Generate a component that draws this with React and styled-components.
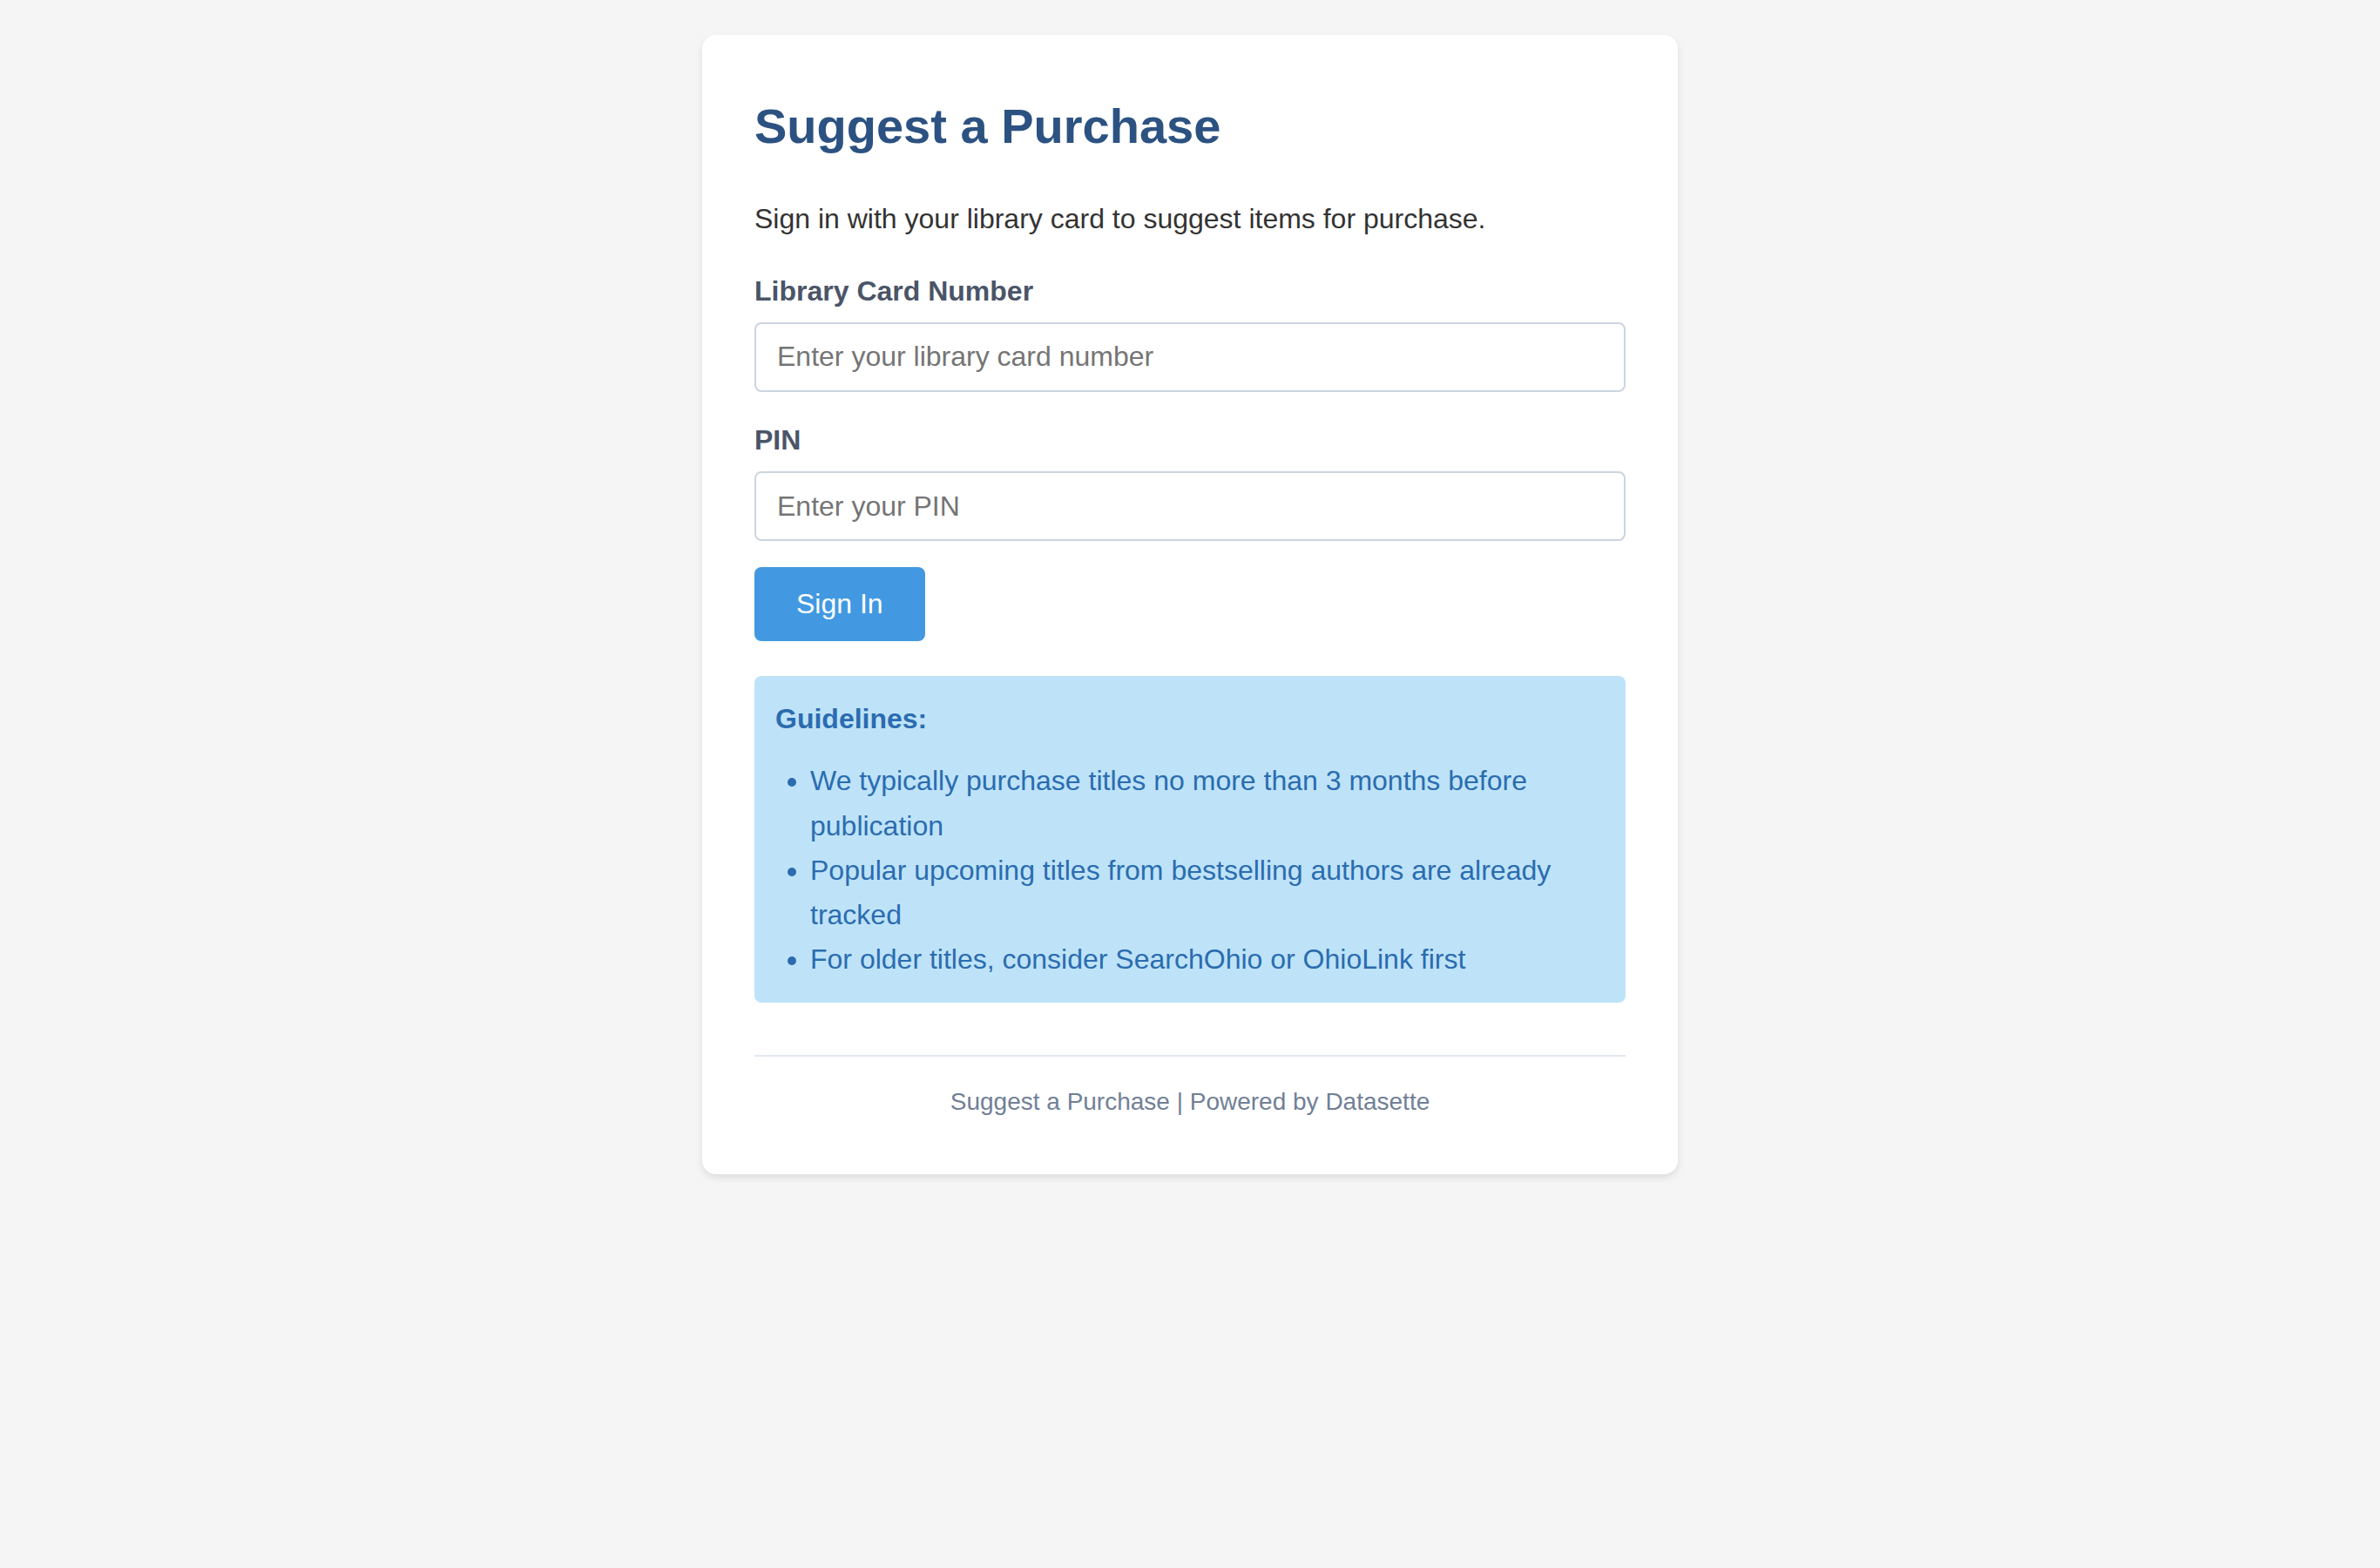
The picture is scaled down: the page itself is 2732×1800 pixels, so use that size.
import styled, { createGlobalStyle } from 'styled-components';

const GlobalStyle = createGlobalStyle`
  * {
    box-sizing: border-box;
  }
  body {
    margin: 0;
    padding: 40px;
    background: #f5f5f5;
    font-family: "Liberation Sans", Arial, Helvetica, sans-serif;
    font-size: 32px;
    line-height: 1.6;
    color: #333;
  }
`;

const Card = styled.div`
  max-width: 1120px;
  margin: 0 auto;
  padding: 60px;
  background: #fff;
  border-radius: 16px;
  box-shadow: 0 4px 8px rgba(0, 0, 0, 0.1);
`;

const Title = styled.h1`
  margin: 0 0 36px;
  font-size: 56px;
  color: #2c5282;
`;

const Intro = styled.p`
  margin: 0 0 32px;
  font-size: 32px;
`;

const FormGroup = styled.div`
  margin-bottom: 30px;
`;

const Label = styled.label`
  display: block;
  margin-bottom: 10px;
  font-weight: bold;
  color: #4a5568;
`;

const Input = styled.input`
  display: block;
  width: 100%;
  height: 80px;
  padding: 20px 24px;
  border: 2px solid #cbd5e0;
  border-radius: 8px;
  font-family: inherit;
  font-size: 32px;
  color: #333;
  &::placeholder {
    color: #757575;
  }
`;

const Button = styled.button`
  display: block;
  padding: 24px 48px;
  border: none;
  border-radius: 8px;
  background: #4299e1;
  color: #fff;
  font-family: inherit;
  font-size: 32px;
  line-height: normal;
  cursor: pointer;
  &:hover {
    background: #3182ce;
  }
`;

const Guidelines = styled.div`
  margin-top: 40px;
  padding: 24px;
  background: #bee3f8;
  color: #2b6cb0;
  border-radius: 8px;
`;

const GuidelinesTitle = styled.strong`
  display: block;
`;

const List = styled.ul`
  margin: 20px 0 0;
  padding-left: 40px;
`;

const Footer = styled.footer`
  margin-top: 60px;
  padding-top: 30px;
  border-top: 2px solid #e2e8f0;
  text-align: center;
  font-size: 28px;
  color: #718096;
`;

const guidelines = [
  'We typically purchase titles no more than 3 months before publication',
  'Popular upcoming titles from bestselling authors are already tracked',
  'For older titles, consider SearchOhio or OhioLink first',
];

export default function App() {
  return (
    <>
      <GlobalStyle />
      <Card>
        <Title>Suggest a Purchase</Title>
        <Intro>Sign in with your library card to suggest items for purchase.</Intro>
        <form onSubmit={(e) => e.preventDefault()}>
          <FormGroup>
            <Label htmlFor="card">Library Card Number</Label>
            <Input id="card" type="text" placeholder="Enter your library card number" />
          </FormGroup>
          <FormGroup>
            <Label htmlFor="pin">PIN</Label>
            <Input id="pin" type="password" placeholder="Enter your PIN" />
          </FormGroup>
          <Button type="submit">Sign In</Button>
        </form>
        <Guidelines>
          <GuidelinesTitle>Guidelines:</GuidelinesTitle>
          <List>
            {guidelines.map((g) => (
              <li key={g}>{g}</li>
            ))}
          </List>
        </Guidelines>
        <Footer>Suggest a Purchase | Powered by Datasette</Footer>
      </Card>
    </>
  );
}
